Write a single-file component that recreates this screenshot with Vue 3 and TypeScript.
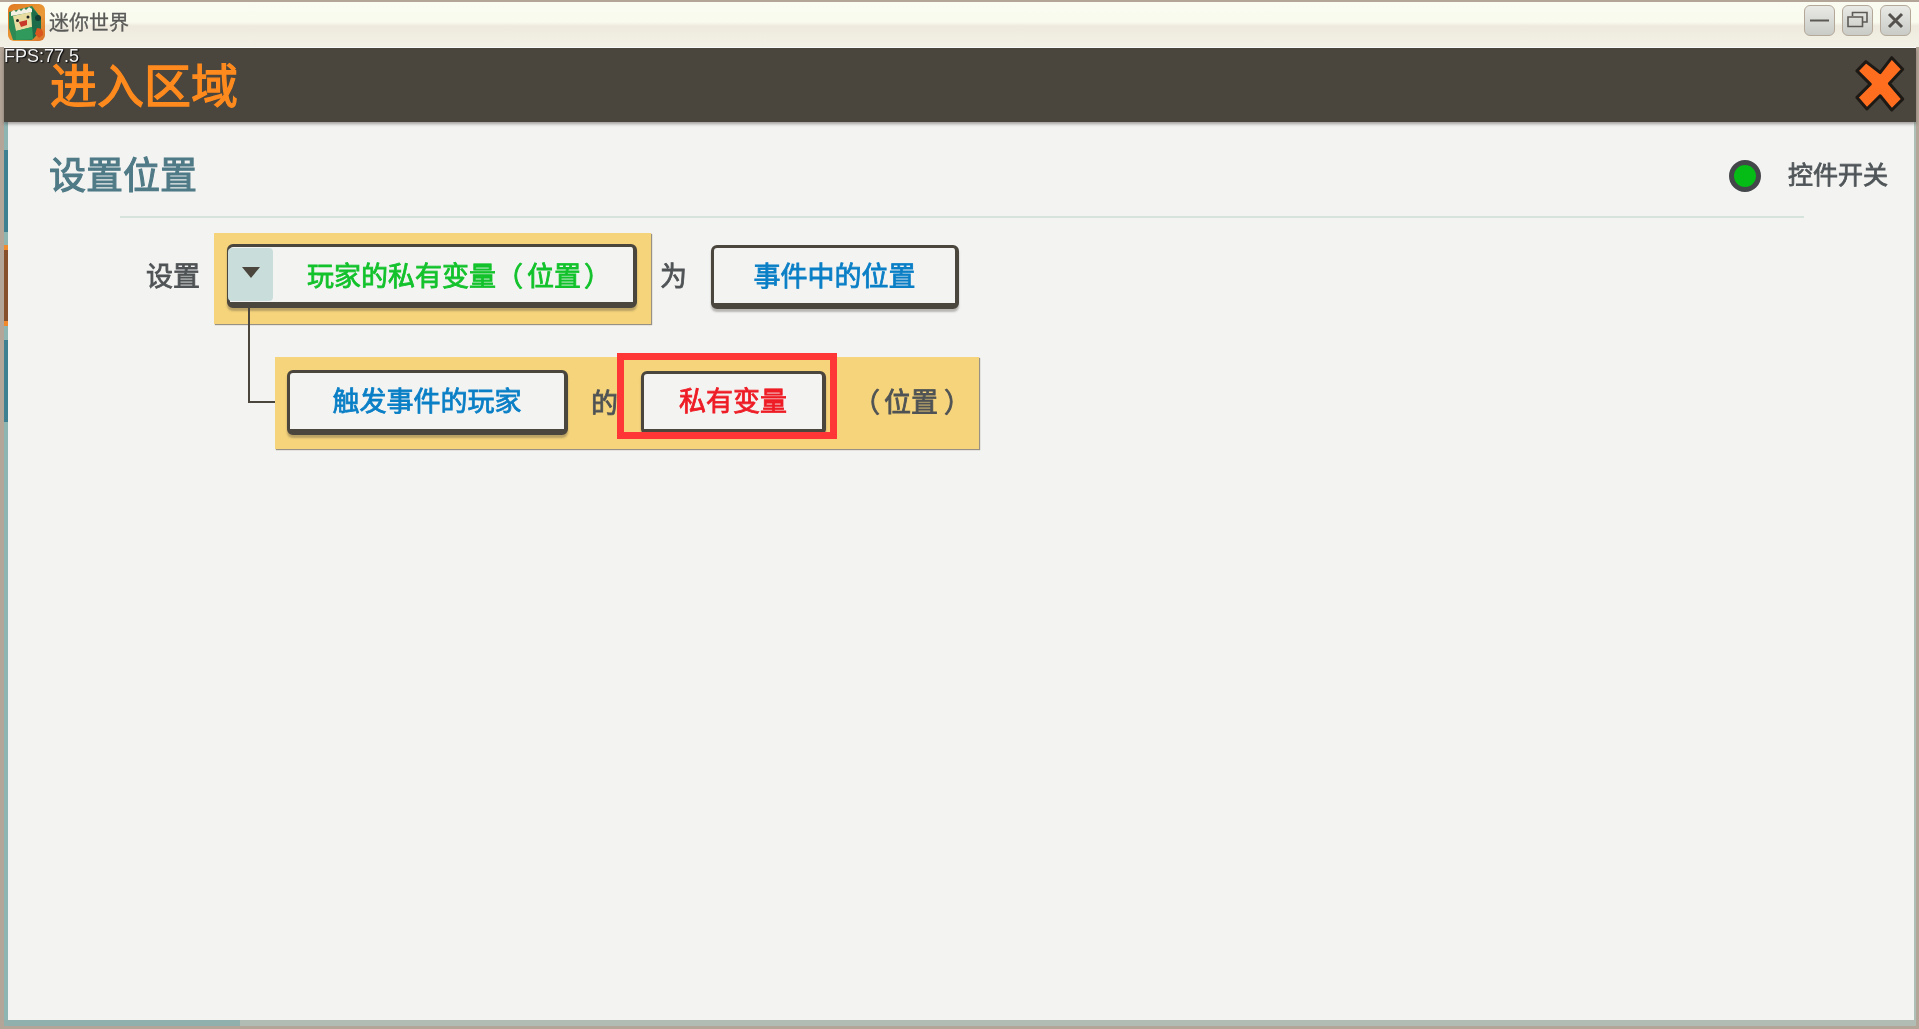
<script setup lang="ts">
import { ref } from "vue";

interface RailTab {
  kind: string;
  height: number;
}

const railTabs: RailTab[] = [
  { kind: "gap", height: 28 },
  { kind: "blue", height: 82 },
  { kind: "gap", height: 13 },
  { kind: "orange", height: 81 },
  { kind: "gap", height: 14 },
  { kind: "blue", height: 82 },
];

const fps = ref("77.5");
</script>

<template>
  <div class="window">
    <div class="titlebar">
      <svg class="app-icon" viewBox="0 0 37 37" width="37" height="37">
        <defs>
          <linearGradient id="iconBg" x1="0" y1="0" x2="1" y2="1">
            <stop offset="0" stop-color="#e07a22" />
            <stop offset="0.6" stop-color="#ea9a38" />
            <stop offset="1" stop-color="#d8702a" />
          </linearGradient>
        </defs>
        <rect width="37" height="37" rx="6" fill="url(#iconBg)" />
        <path d="M1 8 L24 2 L33 14 V26 L24 36 H5 L1 24 Z" fill="#2d8a55" />
        <path d="M3 8 L6 6 L8 8 L11 5 L13 7 L16 4 L18 6 L21 3 L24 5 L25 8 L3 12 Z" fill="#f4f1e4" />
        <path d="M5 12 L23 8 L24 23 L8 27 Z" fill="#e9dca0" />
        <path d="M11 18 L19 16 L19 21 L13 23 Z" fill="#c8392b" />
        <circle cx="9.5" cy="16.5" r="1.5" fill="#222" />
        <circle cx="20" cy="13" r="1.5" fill="#222" />
        <path d="M24 4 L33 14 V26 L25 35 L24 23 Z" fill="#1e6c4a" />
        <circle cx="30" cy="14" r="3" fill="#143d33" />
        <path d="M8 27 L24 23 L25 35 L8 36 Z" fill="#2f9a5c" />
        <path d="M29 24 Q36 24 35 31 L31 34 L27 30 Z" fill="#d9561f" />
      </svg>
      <span class="app-name">迷你世界</span>
      <div class="win-buttons">
        <button class="win-btn">
          <svg viewBox="0 0 31 31" width="31" height="31"><path d="M6 15.5 H25" stroke="#5d5a55" stroke-width="2" /></svg>
        </button>
        <button class="win-btn">
          <svg viewBox="0 0 31 31" width="31" height="31"><path d="M10.5 11 V7.5 H25 V17 H21 M6 12 H20.5 V21.5 H6 Z" fill="none" stroke="#5d5a55" stroke-width="1.6" /></svg>
        </button>
        <button class="win-btn">
          <svg viewBox="0 0 31 31" width="31" height="31"><path d="M9 9 L22 22 M22 9 L9 22" stroke="#55524d" stroke-width="3" /></svg>
        </button>
      </div>
    </div>

    <div class="frame">
      <header class="header">
        <span class="fps">FPS:{{ fps }}</span>
        <h1 class="title">进入区域</h1>
        <svg class="close" viewBox="462 162 152 172" width="51" height="57">
          <path d="M470 210 L497 182 L540 215 L575 170 L608 205 L568 248 L608 295 L575 328 L540 285 L500 325 L470 290 L510 250 Z" fill="#ff6d1f" stroke="#1d1a16" stroke-width="9" stroke-linejoin="round" />
        </svg>
      </header>

      <div class="middle">
        <div class="rail">
          <div
            v-for="(tab, i) in railTabs"
            :key="i"
            :class="['rail-tab', tab.kind]"
            :style="{ height: tab.height + 'px' }"
          ></div>
        </div>

        <main class="content">
          <div class="heading-row">
            <h2 class="heading">设置位置</h2>
            <div class="toggle">
              <span class="dot"></span>
              <span class="toggle-label">控件开关</span>
            </div>
          </div>
          <div class="divider"></div>

          <div class="row first">
            <span class="word set">设置</span>
            <div class="slot slot-main">
              <div class="btn btn-player">
                <span class="dropdown"><i class="arrow"></i></span>
                <span class="green">玩家的私有变量<span class="paren open">（</span>位置<span class="paren close">）</span></span>
              </div>
            </div>
            <span class="word wei">为</span>
            <div class="btn btn-event"><span class="blue">事件中的位置</span></div>
          </div>

          <div class="row second">
            <div class="slot slot-sub">
              <i class="connector"></i>
              <div class="btn btn-trigger"><span class="blue">触发事件的玩家</span></div>
              <span class="word de">的</span>
              <div class="btn btn-var">
                <span class="red">私有变量</span>
                <i class="highlight"></i>
              </div>
              <span class="word pos"><span class="paren open">（</span>位置<span class="paren close">）</span></span>
            </div>
          </div>
        </main>

        <div class="rail-right"></div>
      </div>

      <div class="bottom-bar"><div class="bottom-thumb"></div></div>
    </div>
  </div>
</template>

<style>
html,
body {
  margin: 0;
  overflow: hidden;
}
</style>

<style scoped>
.window {
  width: 1919px;
  height: 1029px;
  display: flex;
  flex-direction: column;
  background: #b3a597;
  font-family: "Noto Sans CJK SC", "Liberation Sans", sans-serif;
  overflow: hidden;
  filter: blur(0.45px);
}

.titlebar {
  height: 45px;
  margin-top: 2px;
  display: flex;
  align-items: center;
  flex-shrink: 0;
  padding-left: 8px;
  background: linear-gradient(#fbfcf1 0, #fafbef 20px, #eeeadd 24px, #f3f1e6 45px);
}

.app-icon {
  margin-top: -4px;
}

.app-name {
  margin-left: 4px;
  margin-top: -6px;
  font-size: 20px;
  -webkit-text-stroke: 0.3px #5a5a58;
  color: #5a5a58;
}

.win-buttons {
  margin-left: auto;
  margin-right: 8px;
  margin-top: -8px;
  display: flex;
  gap: 7px;
}

.win-btn {
  width: 31px;
  height: 31px;
  padding: 0;
  border: 1px solid #b4a899;
  border-radius: 6px;
  background: linear-gradient(#e9eae6, #c9cbc6);
  box-sizing: border-box;
  display: flex;
  align-items: center;
  justify-content: center;
}

.win-btn svg {
  flex-shrink: 0;
}

.frame {
  flex: 1;
  min-height: 0;
  margin: 0 3px 3px 4px;
  display: flex;
  flex-direction: column;
  border-top: 1px solid #fff;
}

.header {
  position: relative;
  height: 74px;
  flex-shrink: 0;
  display: flex;
  align-items: center;
  padding: 0 11px 0 46px;
  background: #4a453d;
  box-shadow: 0 2px 3px rgba(60, 55, 50, 0.45);
  z-index: 1;
}

.fps {
  position: absolute;
  left: 0;
  top: 1px;
  font-family: "Liberation Sans", sans-serif;
  font-size: 18px;
  line-height: 14px;
  color: #f2f2f2;
  text-shadow: 1px 1px 1px #111, 1px 0 1px #111;
}

.title {
  margin: -5px 0 0;
  font-size: 47px;
  line-height: 40px;
  font-weight: 400;
  -webkit-text-stroke: 1.3px #ff8a1d;
  color: #ff8a1d;
}

.close {
  margin-left: auto;
  margin-top: -4px;
}

.middle {
  flex: 1;
  min-height: 0;
  display: flex;
}

.rail {
  width: 4px;
  flex-shrink: 0;
  background: #8fb5b3;
  display: flex;
  flex-direction: column;
}

.rail-tab.blue {
  background: #3f7f92;
}

.rail-tab.orange {
  background: #86502c;
  border-top: 5px solid #f08a2c;
  border-bottom: 5px solid #f08a2c;
  box-sizing: border-box;
}

.rail-right {
  width: 2px;
  flex-shrink: 0;
  background: #aebfb7;
}

.content {
  flex: 1;
  min-width: 0;
  background: #f3f3f2;
  box-sizing: border-box;
}

.heading-row {
  display: flex;
  align-items: center;
  justify-content: space-between;
  height: 94px;
  padding: 7px 26px 0 41px;
  box-sizing: border-box;
}

.heading {
  margin: 0;
  font-size: 37px;
  line-height: 50px;
  font-weight: 400;
  -webkit-text-stroke: 1.1px #4f7a86;
  color: #4f7a86;
}

.toggle {
  display: flex;
  align-items: center;
  gap: 27px;
  margin-top: 1px;
}

.dot {
  width: 22px;
  height: 22px;
  margin-top: 5px;
  border-radius: 50%;
  background: #05bb16;
  border: 5px solid #44474a;
}

.toggle-label {
  font-size: 25px;
  line-height: 34px;
  -webkit-text-stroke: 0.8px #4f5558;
  color: #4f5558;
}

.divider {
  height: 2px;
  margin: 0 110px 0 112px;
  background: #d5e3dc;
}

.row {
  display: flex;
  align-items: center;
}

.row.first {
  margin: 15px 0 0 138px;
}

.row.second {
  margin: 33px 0 0 267px;
}

.word {
  font-size: 27px;
  line-height: 38px;
  -webkit-text-stroke: 0.8px #4f5355;
  color: #4f5355;
  white-space: nowrap;
}

.set {
  margin: 0 14px 7px 0;
}

.wei {
  margin: 0 24px 7px 9px;
}

.de {
  margin: 0 23px 2px;
}

.pos {
  margin: 0 0 3px 31px;
}

.paren {
  display: inline-block;
  width: 1em;
  text-align: center;
}

.paren.open {
  margin: 0 4px 0 -4px;
}

.paren.close {
  margin: 0 -6px 0 6px;
}

.green .paren.open {
  margin: 0 4px 0 0;
}

.green .paren.close {
  margin: 0 -3px 0 3px;
}

.slot {
  position: relative;
  display: flex;
  align-items: center;
  box-sizing: border-box;
  background: #f6d47b;
  box-shadow: 1px 1px 1px rgba(90, 80, 60, 0.6);
}

.slot-main {
  padding: 11px 14px 16px 13px;
}

.slot-sub {
  padding: 13px 14px 14px 12px;
}

.connector {
  position: absolute;
  left: -27px;
  top: -49px;
  width: 27px;
  height: 95px;
  box-sizing: border-box;
  border-left: 2px solid #4a453d;
  border-bottom: 2px solid #4a453d;
}

.btn {
  position: relative;
  display: flex;
  align-items: center;
  justify-content: center;
  box-sizing: border-box;
  height: 64px;
  background: #f3f3f2;
  border-style: solid;
  border-color: #4a453d;
  border-width: 3px 4px 6px 3px;
  border-radius: 6px;
  box-shadow: 0 3px 2px rgba(74, 69, 61, 0.35);
  font-size: 27px;
  line-height: 38px;
  -webkit-text-stroke: 0.8px;
  white-space: nowrap;
}

.btn-player {
  width: 410px;
  justify-content: flex-start;
}

.btn-player .green {
  margin-left: 34px;
}

.btn-event {
  width: 248px;
  margin-bottom: 3px;
  padding-bottom: 1px;
}

.dropdown {
  width: 45px;
  height: 53px;
  margin-left: -2px;
  margin-bottom: 1px;
  background: #c9dedb;
  border-radius: 4px;
  display: flex;
  justify-content: center;
  padding-top: 19px;
  box-sizing: border-box;
}

.arrow {
  width: 0;
  height: 0;
  border-left: 9px solid transparent;
  border-right: 9px solid transparent;
  border-top: 11px solid #4a453d;
}

.btn-trigger {
  width: 281px;
  height: 65px;
  padding-bottom: 2px;
}

.btn-var {
  width: 185px;
  padding-bottom: 2px;
}

.highlight {
  position: absolute;
  left: -27px;
  top: -21px;
  width: 220px;
  height: 86px;
  box-sizing: border-box;
  border: 7px solid #ff3636;
  pointer-events: none;
}

.green {
  color: #12c22b;
}

.blue {
  color: #0a7fc6;
}

.red {
  color: #ee1c25;
}

.bottom-bar {
  height: 6px;
  flex-shrink: 0;
  background: #b0bcb4;
}

.bottom-thumb {
  width: 236px;
  height: 100%;
  background: #8fb0ad;
}
</style>
